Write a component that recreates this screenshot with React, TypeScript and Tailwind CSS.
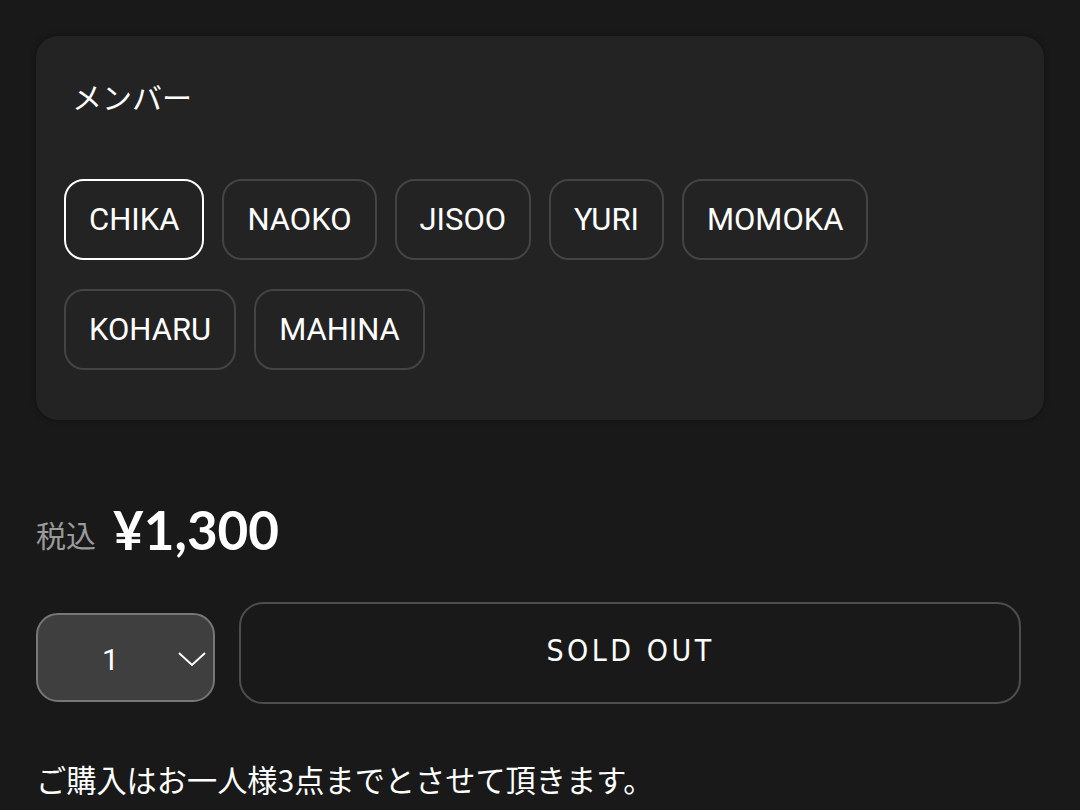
import React from "react";

const members = ["CHIKA", "NAOKO", "JISOO", "YURI", "MOMOKA", "KOHARU", "MAHINA"];

export default function App() {
  return (
    <div
      className="min-h-[810px] w-[1080px] bg-[#191919] text-white px-[36px] pt-[36px] overflow-hidden"
      style={{ fontFamily: "Roboto, 'Noto Sans CJK JP', sans-serif" }}
    >
      <div className="rounded-[22px] bg-[#232323] shadow-[0_0_6px_rgba(0,0,0,0.35)] pt-[42px] pb-[50px] px-[28px]">
        <div className="pl-[8px] text-[30px] leading-[42px] text-white">メンバー</div>
        <div className="mt-[59px] flex flex-wrap gap-x-[18px] gap-y-[29px]">
          {members.map((m, i) => (
            <div
              key={m}
              className={
                i === 0
                  ? "h-[81px] px-[23px] flex items-center rounded-[20px] border-2 border-white text-[31px] leading-none"
                  : "h-[81px] px-[23px] flex items-center rounded-[20px] border-2 border-[#444444] text-[31px] leading-none"
              }
            >
              {m}
            </div>
          ))}
        </div>
      </div>

      <div className="mt-[83px] flex items-end gap-[17px] h-[54px]">
        <span className="text-[30px] leading-[36px] text-[#9a9a9a] mb-[2px]">税込</span>
        <span
          className="text-[53px] leading-[54px] font-bold text-white"
          style={{ fontFamily: "Lato, Inter, sans-serif" }}
        >
          ¥1,300
        </span>
      </div>

      <div className="mt-[45px] flex items-start gap-[24px] pr-[23px]">
        <div className="mt-[11px] w-[179px] h-[89px] shrink-0 rounded-[22px] bg-[#3f3f3f] border-2 border-[#777777] flex items-center relative">
          <span className="absolute left-[64px] top-[27px] text-[30px] leading-[36px] text-white">1</span>
          <svg
            className="absolute left-[140px] top-[36px]"
            width="28"
            height="16"
            viewBox="0 0 28 16"
            fill="none"
            stroke="white"
            strokeWidth="2"
          >
            <path d="M1 2 L14 14 L27 2" />
          </svg>
        </div>
        <div className="flex-1 h-[102px] rounded-[24px] border-2 border-[#4d4d4d] flex items-center justify-center">
          <span
            className="text-[30px] leading-[36px] tracking-[3.5px] text-white pl-[1px] mt-[-4px]"
            style={{ fontFamily: "'DejaVu Sans Condensed', 'Liberation Sans Narrow', sans-serif" }}
          >
            SOLD OUT
          </span>
        </div>
      </div>

      <div className="mt-[55px] text-[30.2px] leading-[40px] text-white" style={{ fontFamily: "'Noto Sans CJK JP', sans-serif" }}>
        ご購入はお一人様3点までとさせて頂きます。
      </div>
    </div>
  );
}
